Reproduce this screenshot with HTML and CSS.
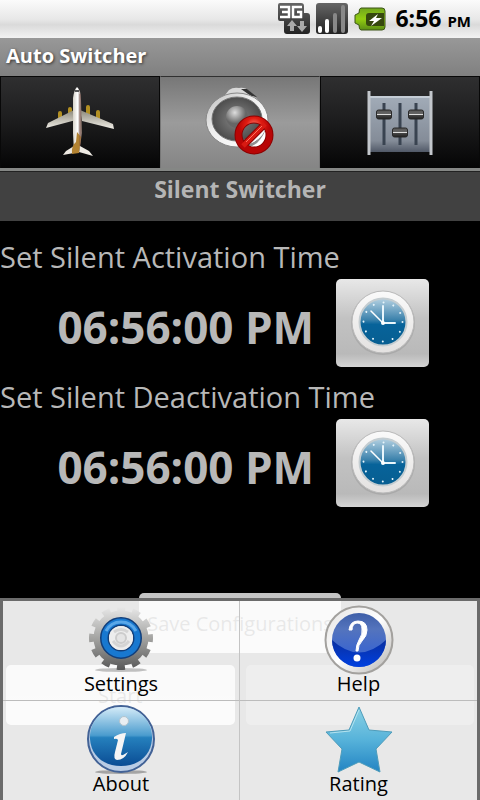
FILE: index.html
```html
<!DOCTYPE html>
<html lang="en">
<head>
<meta charset="utf-8">
<meta name="viewport" content="width=device-width, initial-scale=1">
<title>Auto Switcher</title>
<link rel="stylesheet" href="styles.css">
</head>
<body>
<svg class="defs" aria-hidden="true">
  <defs>
    <linearGradient id="silver" x1="0" y1="0" x2="0" y2="1"><stop offset="0" stop-color="#fafafa"/><stop offset="1" stop-color="#e3e1e0"/></linearGradient>
    <linearGradient id="face" x1="0" y1="0" x2="0" y2="1"><stop offset="0" stop-color="#b4d1e2"/><stop offset=".45" stop-color="#3c82ac"/><stop offset=".55" stop-color="#07639a"/><stop offset="1" stop-color="#075e91"/></linearGradient>
    <symbol id="clock" viewBox="0 0 66 66">
      <circle cx="33" cy="34" r="32" fill="#999" opacity=".5"/>
      <circle cx="33" cy="33" r="31" fill="url(#silver)" stroke="#b9b9b9"/>
      <circle cx="33" cy="33" r="23.500" fill="url(#face)" stroke="#c4cdd1" stroke-width="2"/>
      <circle cx="33" cy="33" r="19.500" fill="none" stroke="#e6f4fb" stroke-width="2" stroke-linecap="round" stroke-dasharray=".01 10.200"/>
      <path d="M33 34V17M33 34H45" stroke="#e9f6fc" stroke-width="2" stroke-linecap="round"/>
      <path d="M33 34 21 22" stroke="#fff" stroke-width="1.500" stroke-linecap="round"/>
      <circle cx="33" cy="34" r="2" fill="#fff"/>
    </symbol>
  </defs>
</svg>
<div class="screen">
  <header class="status">
    <svg width="32" height="32" viewBox="0 0 32 32" aria-label="3G data">
      <defs><linearGradient id="dk" x1="0" y1="0" x2="0" y2="1"><stop offset="0" stop-color="#666"/><stop offset="1" stop-color="#222"/></linearGradient></defs>
      <path d="M2 0H23Q26 0 26 3V10H29Q32 10 32 13V28Q32 31 29 31H9Q6 31 6 28V18H2Q0 18 0 16V2Q0 0 2 0Z" fill="url(#dk)"/>
      <path d="M2 4H11V14H2M4 9H11M24 4H15V14H23V9H19" fill="none" stroke="#fff" stroke-width="2.500"/>
      <path d="M14 17 19 23H16V28H12V23H9Z" fill="#aaa"/><path d="M24 29 19 23H22V18H26V23H29Z" fill="#aaa"/>
    </svg>
    <svg width="32" height="32" viewBox="0 0 32 32" aria-label="Signal">
      <rect width="32" height="31" rx="3" fill="url(#dk)"/>
      <path d="M4 28V25M11 28V18" stroke="#fff" stroke-width="4" stroke-linecap="round"/>
      <path d="M19 28V12M27 28V4" stroke="#888" stroke-width="4" stroke-linecap="round"/>
    </svg>
    <svg width="32" height="24" viewBox="0 0 32 24" aria-label="Battery charging">
      <defs><linearGradient id="bat" x1="0" y1="0" x2="0" y2="1"><stop offset="0" stop-color="#70a51e"/><stop offset=".5" stop-color="#92cc10"/><stop offset="1" stop-color="#5b8d16"/></linearGradient></defs>
      <path d="M7 1H28Q31 1 31 4V20Q31 23 28 23H7Q5 23 5 18L1 16V8L5 6Q5 1 7 1Z" fill="url(#bat)" stroke="#3c5517"/>
      <path d="M30 6H15Q12 6 12 9V16Q12 19 15 19H30Z" fill="#36480e"/>
      <path d="M24 7 15 14H20L17 19 28 11H22Z" fill="#fff"/>
    </svg>
    <time class="now">6:56 <small>PM</small></time>
  </header>
  <h1 class="title">Auto Switcher</h1>
  <nav class="tabs">
    <button class="tab" aria-label="Airplane">
      <svg width="70" height="74" viewBox="0 0 70 74">
        <defs><linearGradient id="fus"><stop offset="0" stop-color="#d6d2c8"/><stop offset=".5" stop-color="#fff"/><stop offset="1" stop-color="#765f55"/></linearGradient>
        <linearGradient id="wing" x1="0" y1="0" x2="0" y2="1"><stop offset="0" stop-color="#8c887a"/><stop offset="1" stop-color="#f0eee7"/></linearGradient></defs>
        <path d="M15 27V33M25 23V30M43 21V29M53 26V34" stroke="#b28f22" stroke-width="4" stroke-linecap="round"/>
        <path d="M29 24 3 37 1 42 31 34ZM35 24 68 38 69 43 37 35Z" fill="url(#wing)"/>
        <path d="M29 60 21 65 18 69 29 67ZM35 60 44 65 48 70 34 66Z" fill="#eeeae3"/>
        <path d="M32 1Q36 4 36 14L37 47 34 67H29L28 47V12Q29 4 32 1Z" fill="url(#fus)"/>
        <path d="M32 46 36 51 34 67 27 68Q26 60 31 56Z" fill="#b28231"/>
        <path d="M35 8V60" stroke="#75433a" opacity=".6"/><path d="M30 5H34" stroke="#555" stroke-width="2"/>
      </svg>
    </button>
    <button class="tab tab-on" aria-label="Silent">
      <svg width="70" height="74" viewBox="0 0 70 74">
        <defs><linearGradient id="ring" x1="0" y1="0" x2="1" y2="1"><stop offset="0" stop-color="#bbb"/><stop offset=".4" stop-color="#eee"/><stop offset="1" stop-color="#fff"/></linearGradient>
        <radialGradient id="cone"><stop offset="0" stop-color="#888"/><stop offset="1" stop-color="#4c4c4c"/></radialGradient>
        <radialGradient id="knob" cx=".4" cy=".3"><stop offset="0" stop-color="#ddd"/><stop offset="1" stop-color="#666"/></radialGradient>
        <radialGradient id="red" cx=".5" cy=".2"><stop offset="0" stop-color="#ff8070"/><stop offset=".5" stop-color="#e01c12"/><stop offset="1" stop-color="#b80505"/></radialGradient></defs>
        <path d="M15 13Q21 9 24 4 28 1 34 2 40 1 44 5L53 14Z" fill="#d9d9d9"/><path d="M36 3 42 3 52 11 46 10Z" fill="#333"/>
        <ellipse cx="32" cy="34" rx="31" ry="27" fill="url(#ring)" stroke="#888"/>
        <ellipse cx="32" cy="33" rx="25" ry="22" fill="url(#cone)" stroke="#777"/>
        <circle cx="32" cy="31" r="11" fill="url(#knob)"/>
        <g transform="translate(49 49)">
          <path d="M-6 12Q5 11 12-6V6Q8 13-6 12Z" fill="#fff"/>
          <circle r="15.500" fill="none" stroke="#8b0000" stroke-width="8"/>
          <path d="M-11 11 11-11" stroke="#8b0000" stroke-width="7"/>
          <circle r="15.500" fill="none" stroke="url(#red)" stroke-width="6"/>
          <path d="M-11 11 11-11" stroke="#d81a12" stroke-width="5"/>
          <path d="M-8 7 8-9" stroke="#ff725f"/>
        </g>
      </svg>
    </button>
    <button class="tab" aria-label="Profiles">
      <svg width="66" height="66" viewBox="0 0 66 66">
        <defs><linearGradient id="panel" x1="0" y1="0" x2="0" y2="1"><stop offset="0" stop-color="#a2acb8"/><stop offset=".8" stop-color="#848c98"/><stop offset="1" stop-color="#515967"/></linearGradient>
        <linearGradient id="sl" x1="0" y1="0" x2="0" y2="1"><stop offset="0" stop-color="#555"/><stop offset=".45" stop-color="#666"/><stop offset=".5" stop-color="#ddd"/><stop offset=".6" stop-color="#444"/><stop offset="1" stop-color="#222"/></linearGradient></defs>
        <rect x="3" y="6" width="60" height="56" fill="url(#panel)"/><path d="M3 7H63" stroke="#c4ccd5" stroke-width="2"/>
        <path d="M2 1V65M64 1V65" stroke="#c3c7cc" stroke-width="3"/>
        <path d="M17 13V55M33 13V55M49 13V55" stroke="#394350" stroke-width="3"/>
        <g fill="url(#sl)" stroke="#292929"><rect x="9.500" y="20" width="15" height="9" rx="2"/><rect x="25.500" y="38" width="15" height="9" rx="2"/><rect x="41.500" y="20" width="15" height="9" rx="2"/></g>
      </svg>
    </button>
  </nav>
  <h2 class="heading">Silent Switcher</h2>
  <main class="content">
    <section class="setting">
      <h3 class="label">Set Silent Activation Time</h3>
      <div class="row"><span class="value">06:56:00 PM</span><button class="pick" aria-label="Pick activation time"><svg width="66" height="66"><use href="#clock"/></svg></button></div>
    </section>
    <section class="setting">
      <h3 class="label">Set Silent Deactivation Time</h3>
      <div class="row"><span class="value">06:56:00 PM</span><button class="pick" aria-label="Pick deactivation time"><svg width="66" height="66"><use href="#clock"/></svg></button></div>
    </section>
    <div class="actions">
      <button class="btn save">Save Configurations</button>
      <div class="pair"><button class="btn">Start</button><button class="btn" disabled aria-label="Stop"></button></div>
    </div>
  </main>
  <nav class="menu">
    <a class="item" href="#settings">
      <svg width="70" height="72" viewBox="0 0 70 72">
        <defs><linearGradient id="gear" gradientUnits="userSpaceOnUse" x1="0" y1="4" x2="0" y2="68"><stop offset="0" stop-color="#e8e8e8"/><stop offset=".5" stop-color="#a2a2a0"/><stop offset="1" stop-color="#555"/></linearGradient></defs>
        <ellipse cx="35" cy="67" rx="26" ry="2" fill="#999" opacity=".6"/>
        <g fill="none" stroke="url(#gear)"><circle cx="35" cy="35" r="22" stroke-width="11"/><circle cx="35" cy="35" r="29" stroke-width="6" stroke-dasharray="8 7.184" stroke-dashoffset="4"/></g>
        <circle cx="35" cy="35" r="16.500" fill="#eee" stroke="#123f7b" stroke-width="9"/>
        <circle cx="35" cy="35" r="16.500" fill="none" stroke="#1878d0" stroke-width="6"/>
        <path d="M20 28A17 17 0 0 1 50 28" fill="none" stroke="#5aa7e8" stroke-width="3"/>
        <circle cx="35" cy="35" r="12" fill="#ededed"/><circle cx="35" cy="35" r="5" fill="#e4e4e4" stroke="#ccc" stroke-width="2"/><path d="M27 38Q35 48 43 38M28 29Q35 24 42 29" fill="none" stroke="#d4d4d4" stroke-width="3"/>
      </svg>
      <span>Settings</span>
    </a>
    <a class="item" href="#help">
      <svg width="70" height="72" viewBox="0 0 70 72">
        <defs><linearGradient id="rim" x1="0" y1="0" x2="1" y2="1"><stop offset="0" stop-color="#e4e3e2"/><stop offset=".5" stop-color="#fff"/><stop offset="1" stop-color="#b5b3b0"/></linearGradient>
        <linearGradient id="q" x1="0" y1="0" x2="0" y2="1"><stop offset="0" stop-color="#3f5fa8"/><stop offset=".3" stop-color="#5474bd"/><stop offset=".65" stop-color="#3f68cc"/></linearGradient>
        <linearGradient id="qlow" x1="0" y1="0" x2="0" y2="1"><stop offset="0" stop-color="#0a2fa0"/><stop offset="1" stop-color="#0040e0"/></linearGradient></defs>
        <circle cx="35" cy="37" r="33.500" fill="url(#rim)" stroke="#a3a19e" stroke-width="2"/>
        <circle cx="35" cy="37" r="27" fill="url(#q)"/>
        <path d="M8 37A27 27 0 0 0 62 37Q35 62 8 37Z" fill="url(#qlow)"/>
        <path d="M25 27Q26 18 34 18Q43 18 43 27Q43 33 38 38Q34 42 34 48H32Q32 42 35 37Q39 31 38 26Q38 20 33 20Q28 21 28 27Z" fill="#fff" stroke="#fff"/><circle cx="33" cy="55" r="3.500" fill="#fff"/>
      </svg>
      <span>Help</span>
    </a>
    <a class="item" href="#about">
      <svg width="70" height="72" viewBox="0 0 70 72">
        <defs><linearGradient id="inf" x1="0" y1="0" x2="0" y2="1"><stop offset="0" stop-color="#d4ebf8"/><stop offset=".48" stop-color="#4b9cce"/><stop offset=".52" stop-color="#2580bd"/><stop offset="1" stop-color="#0a4c94"/></linearGradient></defs>
        <ellipse cx="35" cy="69" rx="26" ry="2" fill="#777" opacity=".6"/>
        <circle cx="35" cy="36" r="33" fill="#b9cce5" stroke="#426296" stroke-width="2"/>
        <path d="M35 4C54 4 67 19 66 36C65 52 53 63 35 63C17 63 5 52 4 36C3 19 16 4 35 4Z" fill="url(#inf)"/>
        <circle cx="38" cy="18" r="4.500" fill="#e9eef2" stroke="#b3c4ce"/>
        <path d="M28 34Q34 30 40 30L35 51Q35 54 42 49Q38 57 31 57Q27 56 29 49L32 37Q31 35 28 36Z" fill="#f5f5f5"/>
      </svg>
      <span>About</span>
    </a>
    <a class="item" href="#rating">
      <svg width="70" height="72" viewBox="0 0 70 72">
        <defs><linearGradient id="star" x1="0" y1="0" x2="0" y2="1"><stop offset="0" stop-color="#8bd2e5"/><stop offset=".5" stop-color="#57b3da"/><stop offset="1" stop-color="#2384c3"/></linearGradient></defs>
        <path d="M35 4 45 27 68 29 52 46 56 69 35 59 14 69 18 46 2 29 25 27Z" fill="url(#star)" stroke="#4e9cba" stroke-linejoin="round"/>
        <path d="M35 7 26 28 6 30" fill="none" stroke="#b4e3ef"/>
      </svg>
      <span>Rating</span>
    </a>
  </nav>
</div>
</body>
</html>
```
FILE: styles.css
```css
* { box-sizing: border-box; }
body { margin: 0; background: #000; font-family: "Open Sans", "Noto Sans", sans-serif; }
button { border: 0; padding: 0; font: inherit; }
h1, h2, h3 { margin: 0; }
svg { display: block; flex: none; }
.defs { position: absolute; width: 0; height: 0; }
.screen { position: relative; display: flex; flex-direction: column; min-height: 100vh; }

.status {
  display: flex; align-items: center; justify-content: flex-end; gap: 6px;
  height: 38px; padding-right: 9px;
  background: linear-gradient(#fbfbfb, #e8e8e8 50%, #dadada 65%, #f2f2f2);
}
.now { margin-left: 3px; font-size: 23px; font-weight: 700; line-height: 38px; white-space: nowrap; color: #000; }
.now small { font-size: 15px; }

.title {
  height: 38px; padding-left: 6px;
  font-size: 20px; line-height: 36px; color: #fff;
  background: linear-gradient(#989898, #808080);
  text-shadow: 1px 1px 3px #333;
}

.tabs { display: grid; grid-template-columns: repeat(3, 1fr); height: 95px; border-bottom: 3px solid #858785; }
.tab {
  display: flex; align-items: center; justify-content: center;
  border: 1px solid #080808; border-width: 1px 1px 0;
  background: linear-gradient(#2f2f30, #1c1c1d 50%, #050505);
}
.tab-on { border-color: #303030 #777 #777; background: linear-gradient(#777, #9b9b9b 50%, #858585); }

.heading {
  height: 50px; border-top: 1px solid #222;
  font-size: 23px; line-height: 34px; text-align: center;
  color: #b5b5b5; background: #414141;
}

.content { flex: 1; display: flex; flex-direction: column; gap: 12px; padding: 18px 0 75px; color: #b8b8b8; }
.label { font-size: 29px; font-weight: 400; line-height: 36px; height: 40px; white-space: nowrap; }
.row { display: flex; align-items: center; justify-content: flex-end; gap: 22px; padding-right: 51px; }
.value { font-size: 44px; font-weight: 700; line-height: 60px; padding-top: 8px; white-space: nowrap; }
.pick {
  display: flex; justify-content: center; width: 93px; height: 88px; padding-top: 10px; border-radius: 5px;
  background: linear-gradient(#e8e8e8, #c2c2c2 45%, #b9b9b9 85%, #d5d5d5);
}
.actions { display: flex; flex-direction: column; align-items: center; gap: 12px; margin-top: auto; }
.btn { height: 60px; border-radius: 5px; background: linear-gradient(#c4c4c4, #d0d0d0); font-size: 20px; color: #000; white-space: nowrap; }
.btn:disabled { background: #4a4a4a; }
.save { padding: 0 8px; }
.pair { display: grid; grid-template-columns: 1fr 1fr; gap: 11px; align-self: stretch; padding: 0 6px; }

.menu {
  position: absolute; inset: auto 0 0 0;
  display: grid; grid-template-columns: 1fr 1fr;
  border: 3px solid #6b6b6b; border-bottom: 0;
  background: rgba(255, 255, 255, .91); background-clip: padding-box;
}
.item {
  display: flex; flex-direction: column; align-items: center;
  height: 100px; padding-top: 2px; border-bottom: 1px solid #bcbcbc;
  font-size: 20px; line-height: 18px; color: #000; text-decoration: none;
}
.item:nth-child(odd) { border-right: 1px solid #c4c4c4; }
.item:nth-child(n + 3) { height: 99px; border-bottom: 0; }
```
